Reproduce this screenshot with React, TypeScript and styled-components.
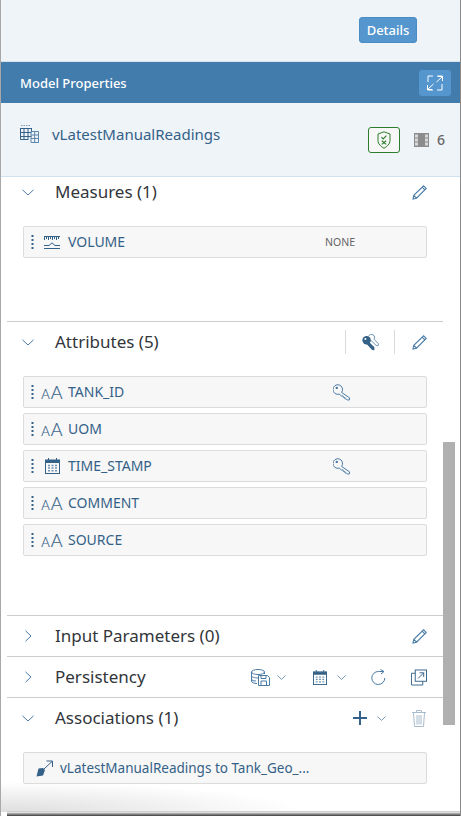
import React from 'react';
import styled, { createGlobalStyle } from 'styled-components';

const blue = '#346187';
const soft = '#4a7ba7';

const GlobalStyle = createGlobalStyle`
  html, body { margin: 0; padding: 0; background: #fff; }
  * { box-sizing: border-box; }
  body { font-family: "Noto Sans", "Open Sans", Arial, sans-serif; }
`;

const Page = styled.div`
  position: relative;
  width: 461px;
  height: 816px;
  overflow: hidden;
  background: #fff;
  border-left: 1px solid #a8a8a8;
  border-right: 1px solid #8a8a8a;
`;

const TopBar = styled.div`
  height: 62px;
  background: #eff4f9;
  border-bottom: 1px solid #d8e2ec;
  display: flex;
  justify-content: flex-end;
  padding: 17px 43px 0 0;
`;

const DetailsButton = styled.button`
  width: 58px;
  height: 26px;
  padding: 0;
  background: #5496cd;
  border: 1px solid #4a8cc4;
  border-radius: 3px;
  color: #fff;
  font: 500 13px "Noto Sans", sans-serif;
`;

const TitleBar = styled.div`
  height: 41px;
  background: #427cac;
  display: flex;
  align-items: center;
  justify-content: space-between;
  padding: 0 9px 0 19px;
  color: #fff;
  font-size: 13px;
  font-weight: 500;
`;

const ExpandButton = styled.div`
  width: 32px;
  height: 26px;
  background: #5496cd;
  border-radius: 3px;
  display: flex;
  align-items: center;
  justify-content: center;
`;

const ModelRow = styled.div`
  height: 74px;
  background: #eff4f9;
  border-bottom: 1px solid #cfe0ef;
  display: flex;
  align-items: center;
  padding: 0 15px 12px 19px;
  color: ${blue};
`;

const ModelName = styled.div`
  flex: 1;
  margin-left: 13px;
  font-size: 15px;
`;

const ShieldButton = styled.div`
  width: 32px;
  height: 26px;
  margin: 12px 14px 0 0;
  background: #f7f7f7;
  border: 1px solid #2b7d2b;
  border-radius: 3px;
  display: flex;
  align-items: center;
  justify-content: center;
`;

const CountBox = styled.div`
  display: flex;
  align-items: center;
  gap: 8px;
  margin-top: 12px;
  color: #666;
  font-size: 14px;
  font-weight: 500;
`;

const Content = styled.div`
  margin-left: 6px;
  width: 436px;
`;

const Section = styled.section<{ $height: number; $flat?: boolean }>`
  height: ${(p) => p.$height}px;
  border-top: ${(p) => (p.$flat ? 'none' : '1px solid #cccccc')};
`;

const SectionHeader = styled.div<{ $height: number }>`
  height: ${(p) => p.$height}px;
  display: flex;
  align-items: center;
  padding-right: 16px;
`;

const Toggle = styled.div`
  width: 48px;
  padding-left: 15px;
  display: flex;
  align-items: center;
`;

const SectionTitle = styled.div`
  flex: 1;
  padding-bottom: 2px;
  color: #32363a;
  font-size: 17px;
`;

const Actions = styled.div`
  display: flex;
  align-items: center;
`;

const Divider = styled.div<{ $gap: number }>`
  width: 1px;
  height: 24px;
  background: #d9d9d9;
  margin-right: ${(p) => p.$gap}px;
`;

const ActionIcon = styled.div<{ $gap?: number }>`
  display: flex;
  align-items: center;
  margin-right: ${(p) => p.$gap ?? 0}px;
`;

const List = styled.div<{ $top: number }>`
  display: flex;
  flex-direction: column;
  gap: 5px;
  margin: ${(p) => p.$top}px 0 0 16px;
  width: 404px;
`;

const Row = styled.div`
  height: 32px;
  background: #f7f7f7;
  border: 1px solid #dcdcdc;
  border-radius: 2px;
  display: flex;
  align-items: center;
  padding-left: 7px;
  color: ${blue};
  font-size: 14px;
`;

const IconSlot = styled.div`
  width: 24px;
  margin-left: 6px;
  display: flex;
  align-items: center;
  justify-content: center;
`;

const TypeIcon = styled.div`
  width: 24px;
  margin-left: 6px;
  font: 300 18px/1 Lato, sans-serif;
  -webkit-text-stroke: 0.2px ${blue};
  color: ${blue};
  text-align: center;
  white-space: nowrap;
  small { font-size: 13px; margin-right: 1px; }
`;

const Label = styled.div`
  width: 257px;
  margin-left: 4px;
  padding-bottom: 2px;
`;

const NoneLabel = styled.div`
  color: #666;
  font-size: 10.5px;
`;

const KeySlot = styled.div`
  margin-left: 8px;
  display: flex;
`;

const AssociationRow = styled(Row)`
  padding-left: 12px;
  gap: 7px;
  font-size: 13.5px;
`;

const Scrollbar = styled.div`
  position: absolute;
  left: 442px;
  top: 442px;
  width: 12px;
  height: 283px;
  background: #b0b0b0;
`;

const BottomGlow = styled.div`
  position: absolute;
  left: 0;
  top: 775px;
  width: 330px;
  height: 37px;
  background: radial-gradient(ellipse 300px 30px at 0 100%, #dedede, rgba(255, 255, 255, 0) 100%);
  pointer-events: none;
`;

const BottomEdge = styled.div`
  position: absolute;
  left: 6px;
  right: 0;
  top: 811px;
  height: 5px;
  background: linear-gradient(#cfcfcf 0, #cfcfcf 1px, #fff 1px, #bdbdbd 2px, #3c3c3c 100%);
`;

const Chevron = ({ open, size = 12 }: { open?: boolean; size?: number }) =>
  open ? (
    <svg width={size} height={7} viewBox="0 0 12 7" fill="none" stroke={soft} strokeWidth="1">
      <path d="M.5.8 6 6l5.5-5.2" />
    </svg>
  ) : (
    <svg width={12} height={12} viewBox="0 0 12 12" fill="none" stroke={soft} strokeWidth="1">
      <path d="M3.5.8 9 6l-5.5 5.2" />
    </svg>
  );

const Pencil = () => (
  <svg width={15} height={15} viewBox="0 0 15 15" fill="none" stroke={soft} strokeWidth="1.1">
    <path d="M1 14l.8-3.6L11.6.8l2.6 2.6-9.7 9.8zM1.8 10.4l2.7 2.8M10.2 2.2 12.8 4.8" />
  </svg>
);

const Grip = () => (
  <svg width={3} height={14} viewBox="0 0 3 14" fill={blue}>
    <rect x=".5" y="0" width="2" height="2" />
    <rect x=".5" y="4" width="2" height="2" />
    <rect x=".5" y="8" width="2" height="2" />
    <rect x=".5" y="12" width="2" height="2" />
  </svg>
);

const Calendar = ({ size = 15 }: { size?: number }) => (
  <svg width={size} height={size + 1} viewBox="0 0 15 16" fill="none" stroke={blue}>
    <rect x=".5" y="2" width="14" height="13.5" />
    <path d="M.5 2.5h14v2H.5z" fill={blue} />
    <path d="M3.5 0v3M11.5 0v3" />
    <path d="M3 7.5h2M6.5 7.5h2M10 7.5h2M3 10h2M6.5 10h2M10 10h2M3 12.7h2M6.5 12.7h2M10 12.7h2" strokeWidth="1.4" stroke="#6f91b0" />
  </svg>
);

const Key = () => (
  <svg width={18} height={17} viewBox="0 0 18 17" fill="none" stroke={soft} strokeWidth="1">
    <path d="M8.6 8.4a4.8 4.8 0 1 0-2.4 1.7l2.3 1.9 1.4-.2.3 1.5 1.5.1.2 1.4 1.4.1 1.1 1.2 2-.2.2-2z" />
    <circle cx="3.8" cy="3.9" r="1.2" fill={soft} stroke="none" />
  </svg>
);

const DoubleKey = () => (
  <svg width={17} height={17} viewBox="0 0 17 17">
    <path d="M6.5 2a3.6 3.6 0 0 1 5-1 3.4 3.4 0 0 1 .6 4.3l4.4 4.5-.4 1.8-1.8-.1L9 6.5" fill="none" stroke="#6d93b5" />
    <circle cx="4.6" cy="6.2" r="4.2" fill={blue} />
    <path d="M6 7l6.4 6.2v3l-2.2-.2-6.6-7z" fill={blue} />
    <circle cx="3.4" cy="5" r="1" fill="#fff" />
  </svg>
);

const TableIcon = () => (
  <svg width={19} height={18} viewBox="0 0 19 18" fill="none" stroke={blue}>
    <path d="M1 .5h10" strokeDasharray="1.5 1" stroke="#7b9ab6" />
    <path d="M.5 3.5h11M.5 7.5h11M.5 11.5h11M.5 3v11.5h8M4 3v11M8 3v11M11.5 3v3" />
    <path d="M11 6.5h7.5v11H11zM11 10h7.5M11 13.5h7.5M14.7 6.5v11" stroke="#5d86aa" />
  </svg>
);

const RulerIcon = () => (
  <svg width={17} height={13} viewBox="0 0 17 13" fill="none" stroke={blue}>
    <path d="M0 .5h16M.5 0v4M2.5 0v3M4.5 0v4M6.5 0v3M8.5 0v4M10.5 0v3M12.5 0v4M14.5 0v3" />
    <path d="M0 9.5h5l3-2.6 3 2.6h5M0 12.5h16" />
  </svg>
);

const ShieldIcon = () => (
  <svg width={14} height={18} viewBox="0 0 14 18" fill="none" stroke="#2b7d2b">
    <path d="M7 .8 13 3v6.6c0 3.4-3 6-6 7.6-3-1.6-6-4.2-6-7.6V3z" />
    <path d="m4.4 6.2 1.8 1.8 3.2-3.4M4.8 9.8l4.4 3.6M9.2 9.8l-4.4 3.6" strokeWidth="1.1" />
  </svg>
);

const ColumnsIcon = () => (
  <svg width={15} height={14} viewBox="0 0 15 14">
    <rect x="0" y="0" width="15" height="14" fill="#8c8c8c" />
    <rect x="1" y="1.5" width="3" height="3" fill="#d8d8d8" />
    <rect x="1" y="5.5" width="3" height="3" fill="#d8d8d8" />
    <rect x="1" y="9.5" width="3" height="3" fill="#d8d8d8" />
    <rect x="11" y="1.5" width="3" height="3" fill="#d8d8d8" />
    <rect x="11" y="5.5" width="3" height="3" fill="#d8d8d8" />
    <rect x="11" y="9.5" width="3" height="3" fill="#d8d8d8" />
  </svg>
);

const ExpandIcon = () => (
  <svg width={16} height={16} viewBox="0 0 16 16" fill="none" stroke="#fff">
    <path d="M1 7V1h5M10 1h5.5v.5L9.5 7M11 1.5h4.5V6M15 9v6h-5M6 15H.5v-.5L6.5 9M5 14.5H.5V10" />
  </svg>
);

const DbSaveIcon = () => (
  <svg width={19} height={17} viewBox="0 0 19 17" fill="none" stroke={soft}>
    <ellipse cx="7" cy="3" rx="6.5" ry="2.5" />
    <path d="M.5 3v9c0 1.4 2.5 2.5 5.5 2.5M.5 6.5C.5 8 3.5 9 7 9M.5 10C.5 11.3 2.5 12 5 12M13.5 3v2" />
    <path d="M7.5 6.5h9l2 2v8h-11z" fill="#fff" />
    <path d="M10 12h5.5v4.5H10zM10 6.5v3h5v-3" />
  </svg>
);

const RefreshIcon = () => (
  <svg width={15} height={16} viewBox="0 0 15 16" fill="none" stroke={soft}>
    <path d="M13.8 9A6.5 6.5 0 1 1 7.5 2.5h5" />
    <path d="M9.5.5l3.5 2-3 2.5" />
  </svg>
);

const ExternalIcon = () => (
  <svg width={16} height={17} viewBox="0 0 17 17" fill="none" stroke={blue}>
    <path d="M4.5 4H.5v12.5h12v-4" />
    <rect x="4.5" y=".5" width="12" height="12" />
    <path d="M7.5 9.5l6-6M9 3.5h4.5V8" />
  </svg>
);

const PlusIcon = () => (
  <svg width={14} height={14} viewBox="0 0 14 14" stroke={blue} strokeWidth="2">
    <path d="M0 7h14M7 0v14" />
  </svg>
);

const TrashIcon = () => (
  <svg width={14} height={17} viewBox="0 0 14 17" fill="none" stroke="#a9bccd">
    <path d="M0 2.5h14M4.5 2V.5h5V2M1.5 3l1 13.5h9l1-13.5M5 5v9.5M7 5v9.5M9 5v9.5" />
  </svg>
);

const AssociationIcon = () => (
  <svg width={17} height={17} viewBox="0 0 17 17">
    <path d="M8 9 16 1.5M10.5 1h6v6" fill="none" stroke={blue} />
    <path d="M2.5 8.5 7 8l2 2-2 5.5L.5 16.5z" fill={blue} />
  </svg>
);

const attributes = [
  { name: 'TANK_ID', isKey: true },
  { name: 'UOM' },
  { name: 'TIME_STAMP', isKey: true, isDate: true },
  { name: 'COMMENT' },
  { name: 'SOURCE' },
];

const App: React.FC = () => {
  return (
    <Page>
      <GlobalStyle />
      <TopBar>
        <DetailsButton>Details</DetailsButton>
      </TopBar>
      <TitleBar>
        Model Properties
        <ExpandButton>
          <ExpandIcon />
        </ExpandButton>
      </TitleBar>
      <ModelRow>
        <TableIcon />
        <ModelName>vLatestManualReadings</ModelName>
        <ShieldButton>
          <ShieldIcon />
        </ShieldButton>
        <CountBox>
          <ColumnsIcon />6
        </CountBox>
      </ModelRow>

      <Content>
        <Section $height={144} $flat>
          <SectionHeader $height={30}>
            <Toggle><Chevron open /></Toggle>
            <SectionTitle>Measures (1)</SectionTitle>
            <Actions><Pencil /></Actions>
          </SectionHeader>
          <List $top={19}>
            <Row>
              <Grip />
              <IconSlot><RulerIcon /></IconSlot>
              <Label>VOLUME</Label>
              <NoneLabel>NONE</NoneLabel>
            </Row>
          </List>
        </Section>

        <Section $height={294}>
          <SectionHeader $height={40}>
            <Toggle><Chevron open /></Toggle>
            <SectionTitle>Attributes (5)</SectionTitle>
            <Actions>
              <Divider $gap={16} />
              <ActionIcon $gap={15}><DoubleKey /></ActionIcon>
              <Divider $gap={17} />
              <Pencil />
            </Actions>
          </SectionHeader>
          <List $top={14}>
            {attributes.map((a) => (
              <Row key={a.name}>
                <Grip />
                {a.isDate ? (
                  <IconSlot><Calendar /></IconSlot>
                ) : (
                  <TypeIcon><small>A</small>A</TypeIcon>
                )}
                <Label>{a.name}</Label>
                {a.isKey && <KeySlot><Key /></KeySlot>}
              </Row>
            ))}
          </List>
        </Section>

        <Section $height={41}>
          <SectionHeader $height={40}>
            <Toggle><Chevron /></Toggle>
            <SectionTitle>Input Parameters (0)</SectionTitle>
            <Actions><Pencil /></Actions>
          </SectionHeader>
        </Section>

        <Section $height={41}>
          <SectionHeader $height={40}>
            <Toggle><Chevron /></Toggle>
            <SectionTitle>Persistency</SectionTitle>
            <Actions>
              <ActionIcon $gap={7}><DbSaveIcon /></ActionIcon>
              <ActionIcon $gap={27}><Chevron open size={9} /></ActionIcon>
              <ActionIcon $gap={10}><Calendar size={14} /></ActionIcon>
              <ActionIcon $gap={25}><Chevron open size={9} /></ActionIcon>
              <ActionIcon $gap={25}><RefreshIcon /></ActionIcon>
              <ExternalIcon />
            </Actions>
          </SectionHeader>
        </Section>

        <Section $height={114}>
          <SectionHeader $height={40}>
            <Toggle><Chevron open /></Toggle>
            <SectionTitle>Associations (1)</SectionTitle>
            <Actions>
              <ActionIcon $gap={10}><PlusIcon /></ActionIcon>
              <ActionIcon $gap={26}><Chevron open size={9} /></ActionIcon>
              <ActionIcon $gap={1}><TrashIcon /></ActionIcon>
            </Actions>
          </SectionHeader>
          <List $top={14}>
            <AssociationRow>
              <AssociationIcon />
              vLatestManualReadings to Tank_Geo_...
            </AssociationRow>
          </List>
        </Section>
      </Content>

      <Scrollbar />
      <BottomGlow />
      <BottomEdge />
    </Page>
  );
};

export default App;
